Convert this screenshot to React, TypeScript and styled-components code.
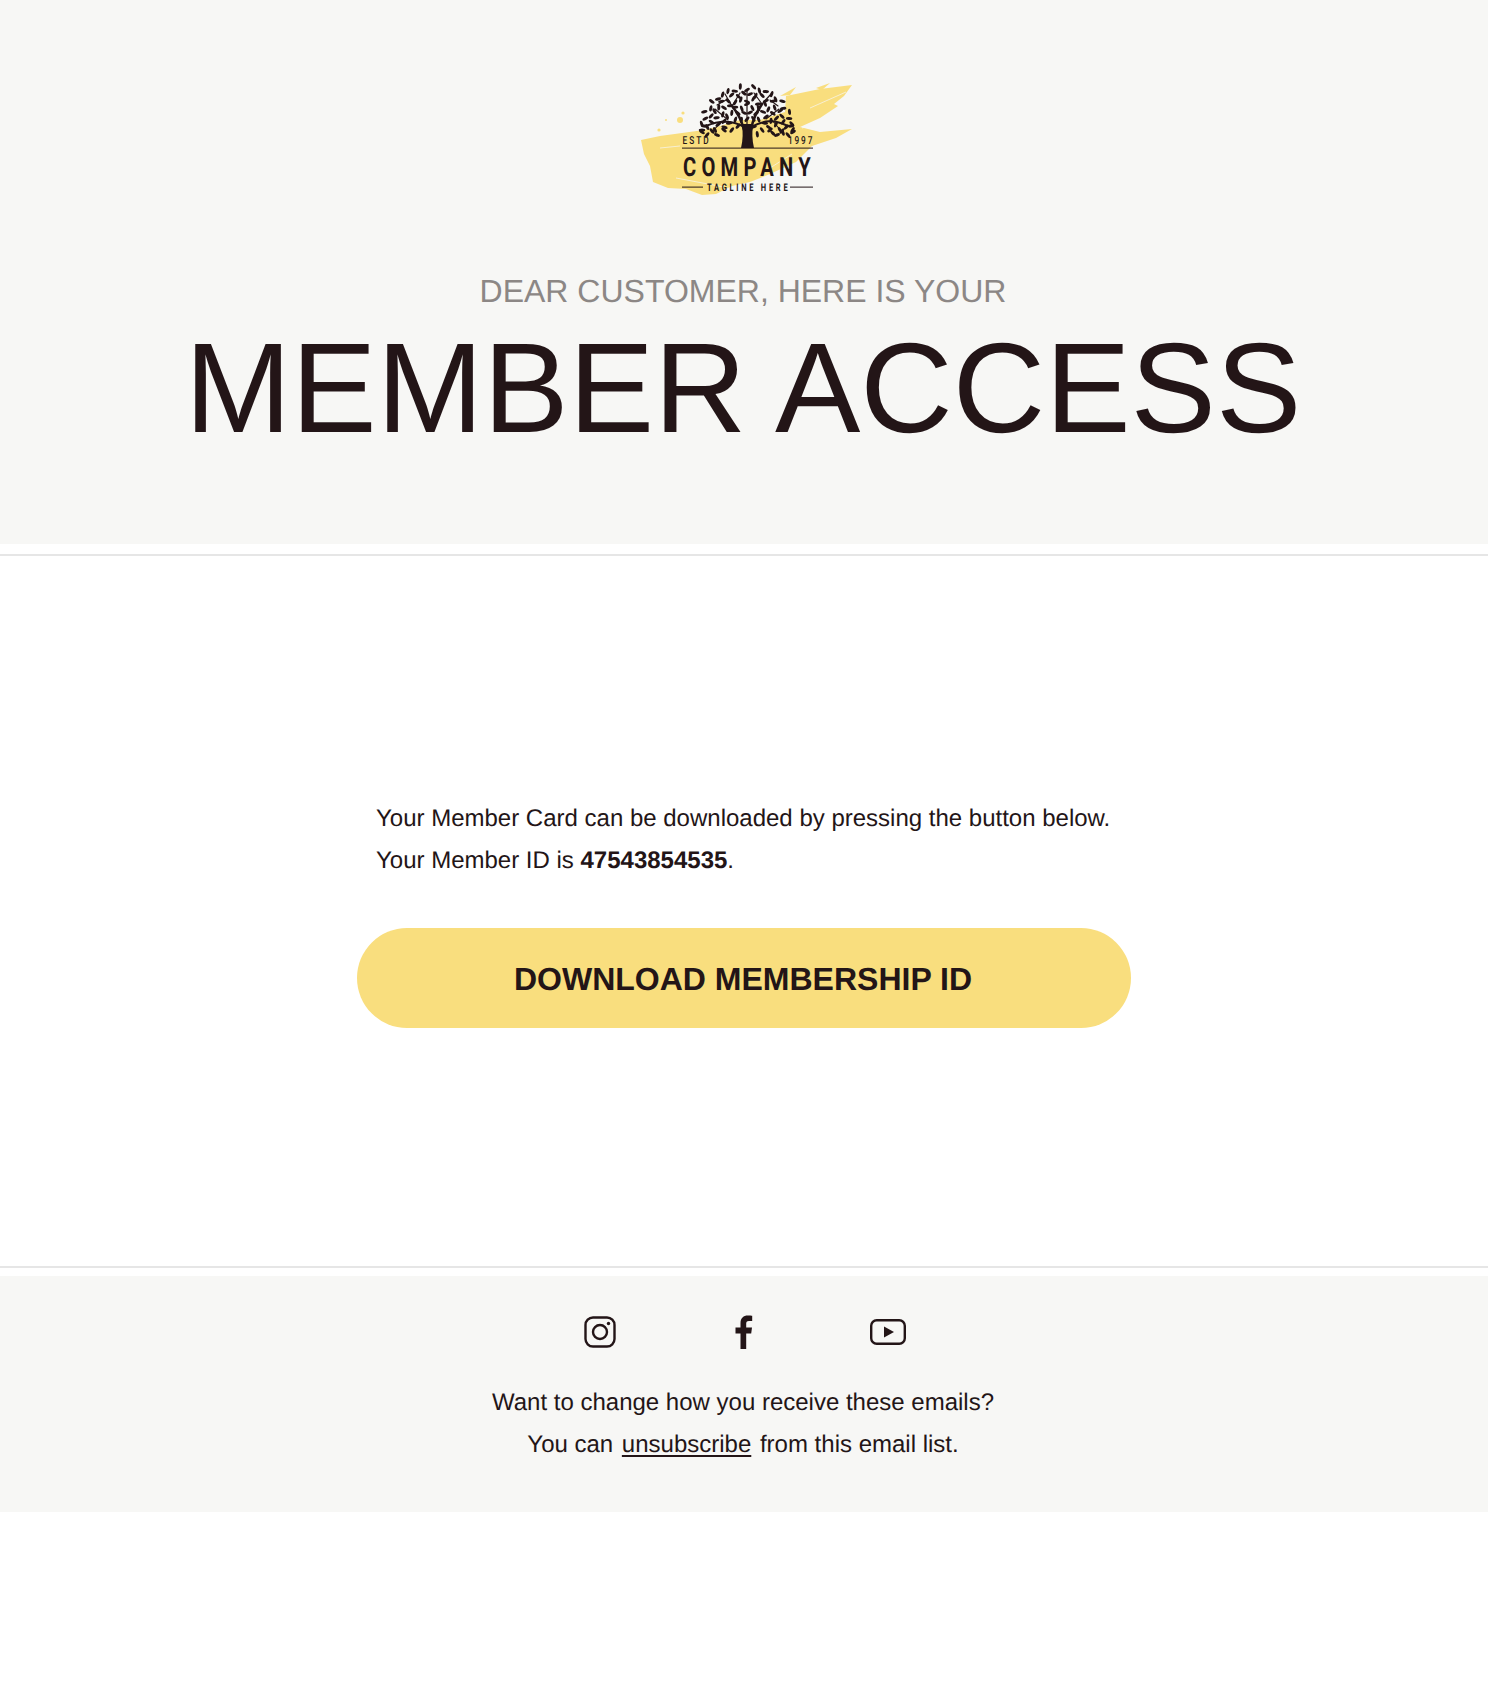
import styled, { createGlobalStyle } from "styled-components";

const GlobalStyle = createGlobalStyle`
  html, body {
    margin: 0;
    padding: 0;
    background: #fff;
  }
  body {
    font-family: "Liberation Sans", Arial, sans-serif;
    color: #231517;
    text-rendering: geometricPrecision;
  }
`;

const Page = styled.div`
  display: flex;
  flex-direction: column;
  min-height: 1696px;
`;

const Header = styled.header`
  display: flex;
  flex-direction: column;
  align-items: center;
  height: 544px;
  box-sizing: border-box;
  padding-top: 70px;
  background: #f7f7f5;
`;

const LogoBox = styled.div`
  display: flex;
  justify-content: center;
  width: 250px;
  height: 130px;
  margin-left: 2px;
`;

const Eyebrow = styled.div`
  margin-top: 70px;
  padding-right: 2px;
  font-size: 32px;
  line-height: 42px;
  color: #8c8785;
`;

const Title = styled.h1`
  margin: 12px 0 0;
  padding-right: 2px;
  font-size: 128px;
  font-weight: 400;
  line-height: 130px;
  white-space: nowrap;
`;

const Main = styled.main`
  display: flex;
  flex-direction: column;
  align-items: center;
  height: 712px;
  box-sizing: border-box;
  margin-top: 10px;
  padding-top: 242px;
  border-top: 2px solid #e6e6e6;
`;

const Copy = styled.p`
  width: 736px;
  margin: 0 0 46px;
  font-size: 24px;
  line-height: 42px;
`;

const DownloadButton = styled.a`
  display: flex;
  align-items: center;
  justify-content: center;
  width: 774px;
  height: 100px;
  padding: 2px 2px 0 0;
  box-sizing: border-box;
  border-radius: 50px;
  background: #f9de7e;
  color: #231517;
  font-size: 32px;
  font-weight: 700;
  text-decoration: none;
`;

const Footer = styled.footer`
  display: flex;
  flex-direction: column;
  align-items: center;
  box-sizing: border-box;
  padding-top: 8px;
  border-top: 2px solid #e6e6e6;
`;

const FooterPanel = styled.div`
  display: flex;
  flex-direction: column;
  align-items: center;
  align-self: stretch;
  height: 236px;
  box-sizing: border-box;
  padding-top: 38px;
  background: #f7f7f5;
`;

const Socials = styled.div`
  display: flex;
  margin-bottom: 32px;
`;

const SocialLink = styled.a`
  display: flex;
  align-items: center;
  justify-content: center;
  width: 144px;
  height: 36px;
  color: #231517;
`;

const FooterText = styled.p`
  margin: 0;
  padding-right: 2px;
  font-size: 24px;
  line-height: 42px;
  text-align: center;
`;

const Unsubscribe = styled.a`
  margin: 0 2px;
  color: inherit;
  text-decoration: underline;
  text-underline-offset: 3px;
  text-decoration-thickness: 1.5px;
`;

// leaves sit on a few arcs of the crown, jittered so the edge is not a clean outline
const crownLeaves = (() => {
  const out: { x: number; y: number; r: number }[] = [];
  const rings = [
    { rx: 45, ry: 42, n: 22 },
    { rx: 38, ry: 36, n: 20 },
    { rx: 31, ry: 30, n: 16 },
    { rx: 24, ry: 24, n: 13 },
    { rx: 17, ry: 18, n: 9 },
    { rx: 9, ry: 12, n: 5 },
  ];
  rings.forEach((ring, i) => {
    for (let k = 0; k <= ring.n; k++) {
      const a = Math.PI + (Math.PI * (k + (i % 2) * 0.5)) / ring.n;
      const wobble = 2 * Math.sin(k * 2.7 + i * 1.3);
      const x = 127 + (ring.rx + wobble) * Math.cos(a);
      const y = 60 + (ring.ry + wobble) * Math.sin(a);
      out.push({ x, y, r: (a * 180) / Math.PI + 70 * Math.sin(k * 1.9 + i) });
    }
  });
  return out;
})();

const lowerLeaves = [
  [82, 62, 35], [87, 65, -50], [92, 61, 50], [97, 65, 20], [84, 56, 10], [104, 60, 40],
  [173, 62, -35], [168, 65, 50], [162, 61, -50], [157, 65, -20], [171, 56, -10], [150, 60, -40],
];

const Logo = () => (
  <svg width="250" height="130" viewBox="0 0 250 130" aria-label="Company logo">
    <g fill="#f9de7e">
      <path d="M21 70 L40 66 L62 63 L84 60 L100 56 L120 50 L140 50 L165 42 L166 26 L200 19 L232 15 L224 26 L214 34 L218 36 L200 48 L180 57 L200 62 L232 59 L216 68 L192 76 L176 92 L150 104 L130 112 L112 116 L96 124 L82 125 L66 119 L48 118 L33 112 L30 96 L24 84 Z" />
      <path d="M160 26 L176 17 L170 25 Z" />
      <path d="M196 18 L210 13 L202 20 Z" />
      <circle cx="60" cy="50" r="3" />
      <circle cx="63" cy="43" r="1.6" />
      <circle cx="39" cy="60" r="1.6" />
      <circle cx="46" cy="50" r="1" />
    </g>
    <g fill="none" stroke="#f7f7f5" strokeWidth="0.7">
      <path d="M56 108 L104 117" />
      <path d="M182 58 L226 46" />
      <path d="M190 38 L226 22" />
      <path d="M40 78 L60 76" />
      <path d="M150 98 L172 84" />
    </g>
    <g fill="#231517">
      <path d="M121 78 C123 70 123 62 122 54 L133 54 C132 62 132 70 134 78 Z" />
      {crownLeaves.map((leaf, i) => (
        <ellipse
          key={i}
          cx={leaf.x}
          cy={leaf.y}
          rx="3.2"
          ry="1.5"
          transform={`rotate(${leaf.r} ${leaf.x} ${leaf.y})`}
        />
      ))}
      {lowerLeaves.map(([x, y, r], i) => (
        <ellipse key={i} cx={x} cy={y} rx="3.2" ry="1.5" transform={`rotate(${r} ${x} ${y})`} />
      ))}
    </g>
    <g fill="none" stroke="#231517" strokeLinecap="round">
      <path strokeWidth="2.6" d="M124 60 C121 48 117 42 112 36 M131 60 C133 48 137 42 142 34" />
      <path strokeWidth="2" d="M124 57 C112 50 100 50 86 56 M131 57 C144 50 154 49 168 56" />
      <path strokeWidth="1.2" d="M112 36 L105 24 M112 36 L120 23 M142 34 L134 23 M142 34 L151 24 M127 56 L127 21" />
      <path strokeWidth="1.1" d="M108 50 L95 39 M146 49 L159 39 M102 51 L92 62 M152 50 L162 62 M106 30 L97 35 M150 30 L158 36" />
    </g>
    <rect x="62" y="77.6" width="131" height="1" fill="#231517" />
    <rect x="62" y="116.6" width="21" height="1" fill="#231517" />
    <rect x="170" y="116.6" width="23" height="1" fill="#231517" />
    <g fill="#231517" fontFamily="Roboto, sans-serif">
      <g transform="translate(62.5 74) scale(0.75 1)">
        <text fontSize="11" fontWeight="500" textLength="35">ESTD</text>
      </g>
      <g transform="translate(168 74) scale(0.75 1)">
        <text fontSize="11" fontWeight="500" textLength="32.5">1997</text>
      </g>
      <g transform="translate(63 106) scale(0.76 1)">
        <text fontSize="26.5" fontWeight="700" textLength="168">COMPANY</text>
      </g>
      <g transform="translate(87 120.5) scale(0.72 1)">
        <text fontSize="10.5" fontWeight="700" textLength="112">TAGLINE HERE</text>
      </g>
    </g>
  </svg>
);

const InstagramIcon = () => (
  <svg width="32" height="32" viewBox="0 0 32 32" fill="none" stroke="currentColor" strokeWidth="2.4">
    <rect x="1.5" y="1.5" width="29" height="29" rx="7.5" />
    <circle cx="16" cy="16" r="7" />
    <circle cx="24.5" cy="7.5" r="1.7" fill="currentColor" stroke="none" />
  </svg>
);

const FacebookIcon = () => (
  <svg width="18" height="34" viewBox="0 0 18 34" fill="currentColor">
    <path d="M5.5 34 V18.5 H0.5 V12.5 H5.5 V8 C5.5 3 8.5 0.5 12.8 0.5 C14.8 0.5 16.4 0.6 17.2 0.7 V6 H14 C11.6 6 11.2 7.2 11.2 8.8 V12.5 H17 L16.2 18.5 H11.2 V34 Z" />
  </svg>
);

const YoutubeIcon = () => (
  <svg width="36" height="26" viewBox="0 0 36 26" fill="none">
    <rect x="1.2" y="1.2" width="33.6" height="23.6" rx="5.5" stroke="currentColor" strokeWidth="2.4" />
    <path d="M14 7.5 L24 13 L14 18.5 Z" fill="currentColor" />
  </svg>
);

export default function App() {
  return (
    <Page>
      <GlobalStyle />
      <Header>
        <LogoBox>
          <Logo />
        </LogoBox>
        <Eyebrow>DEAR CUSTOMER, HERE IS YOUR</Eyebrow>
        <Title>MEMBER ACCESS</Title>
      </Header>
      <Main>
        <Copy>
          Your Member Card can be downloaded by pressing the button below.
          <br />
          Your Member ID is <strong>47543854535</strong>.
        </Copy>
        <DownloadButton href="#">DOWNLOAD MEMBERSHIP ID</DownloadButton>
      </Main>
      <Footer>
        <FooterPanel>
          <Socials>
            <SocialLink href="#" aria-label="Instagram">
              <InstagramIcon />
            </SocialLink>
            <SocialLink href="#" aria-label="Facebook">
              <FacebookIcon />
            </SocialLink>
            <SocialLink href="#" aria-label="YouTube">
              <YoutubeIcon />
            </SocialLink>
          </Socials>
          <FooterText>
            Want to change how you receive these emails?
            <br />
            You can <Unsubscribe href="#">unsubscribe</Unsubscribe> from this email list.
          </FooterText>
        </FooterPanel>
      </Footer>
    </Page>
  );
}
